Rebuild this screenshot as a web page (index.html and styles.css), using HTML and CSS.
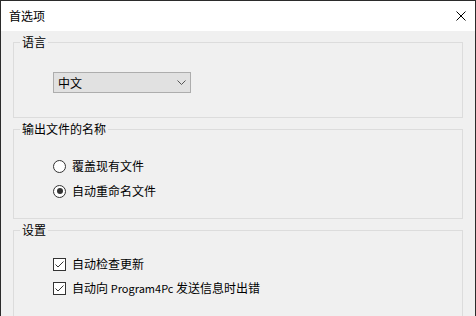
FILE: index.html
```html
<!DOCTYPE html>
<html lang="zh-CN">
<head>
  <meta charset="UTF-8" />
  <meta name="viewport" content="width=device-width, initial-scale=1.0" />
  <title>首选项</title>
  <link rel="stylesheet" href="styles.css">
</head>
<body>
  <div class="window">
    <div class="titlebar">
      <span class="title">首选项</span>
      <button class="close" aria-label="关闭">
        <svg width="10" height="10" viewBox="0 0 10 10">
          <path d="M0.5 0.5 L9.5 9.5 M9.5 0.5 L0.5 9.5" stroke="#000" stroke-width="1" fill="none" />
        </svg>
      </button>
    </div>

    <div class="content">
      <fieldset class="group">
        <legend>语言</legend>
        <div class="group-body lang-body">
          <div class="select">
            <span>中文</span>
            <svg width="9" height="5" viewBox="0 0 9 5">
              <polyline points="0.5,0.5 4.5,4.5 8.5,0.5" stroke="#555" stroke-width="1" fill="none" />
            </svg>
          </div>
        </div>
      </fieldset>

      <fieldset class="group">
        <legend>输出文件的名称</legend>
        <div class="group-body radio-body">
          <label class="option"><span class="radio"></span><span>覆盖现有文件</span></label>
          <label class="option"><span class="radio checked"></span><span>自动重命名文件</span></label>
        </div>
      </fieldset>

      <fieldset class="group">
        <legend>设置</legend>
        <div class="group-body check-body">
          <label class="option">
            <span class="checkbox">
              <svg width="11" height="11" viewBox="0 0 11 11">
                <polyline points="1.5,5.5 4,8 9.5,2.5" stroke="#333" stroke-width="1" fill="none" />
              </svg>
            </span>
            <span>自动检查更新</span>
          </label>
          <label class="option">
            <span class="checkbox">
              <svg width="11" height="11" viewBox="0 0 11 11">
                <polyline points="1.5,5.5 4,8 9.5,2.5" stroke="#333" stroke-width="1" fill="none" />
              </svg>
            </span>
            <span>自动向 <span class="latin">Program4Pc</span> 发送信息时出错</span>
          </label>
        </div>
      </fieldset>
    </div>
  </div>
</body>
</html>
```

FILE: styles.css
```css
:root {
  --frame: #2b2b2b;
  --panel: #f0f0f0;
  --group-border: #dcdcdc;
  --text: #000000;
  --control-border: #333333;
  --select-bg: #e1e1e1;
  --select-border: #adadad;
}

html, body {
  margin: 0;
  padding: 0;
}

body {
  font-family: "Noto Sans CJK SC", "Noto Sans", sans-serif;
  font-size: 12px;
  color: var(--text);
  background-color: #ffffff;
}

.window {
  width: 476px;
  height: 316px;
  box-sizing: border-box;
  border: 1px solid var(--frame);
  border-bottom: none;
  display: flex;
  flex-direction: column;
  overflow: hidden;
}

.titlebar {
  height: 30px;
  flex: none;
  display: flex;
  align-items: center;
  justify-content: space-between;
  background-color: #ffffff;
  padding: 0 9px 0 8px;
}

.title {
  line-height: 16px;
}

.close {
  background: none;
  border: none;
  padding: 0;
  margin: 0;
  width: 10px;
  height: 10px;
  display: flex;
}

.content {
  flex: 1;
  background-color: var(--panel);
  padding: 3px 12px 0 12px;
  display: flex;
  flex-direction: column;
  gap: 3px;
}

.group {
  margin: 0;
  padding: 0;
  border: 1px solid var(--group-border);
  min-width: 0;
}

.group legend {
  margin-left: 6px;
  padding: 0 2px;
  line-height: 16px;
}

.group-body {
  padding-left: 39px;
}

.lang-body {
  padding-top: 22px;
  padding-bottom: 24px;
}

.select {
  width: 138px;
  height: 21px;
  box-sizing: border-box;
  background-color: var(--select-bg);
  border: 1px solid var(--select-border);
  display: flex;
  align-items: center;
  justify-content: space-between;
  padding: 0 4px 0 4px;
  line-height: 16px;
}

.radio-body {
  padding-top: 19px;
  padding-bottom: 17px;
  display: flex;
  flex-direction: column;
  gap: 5px;
}

.check-body {
  padding-top: 16px;
  padding-bottom: 20px;
  display: flex;
  flex-direction: column;
  gap: 4px;
}

.option {
  height: 20px;
  display: flex;
  align-items: center;
  gap: 6px;
  line-height: 16px;
}

.radio {
  width: 13px;
  height: 13px;
  box-sizing: border-box;
  border: 1px solid var(--control-border);
  border-radius: 50%;
  background-color: #ffffff;
  display: flex;
  align-items: center;
  justify-content: center;
}

.radio.checked::after {
  content: "";
  width: 6px;
  height: 6px;
  border-radius: 50%;
  background-color: var(--control-border);
}

.checkbox {
  width: 13px;
  height: 13px;
  box-sizing: border-box;
  border: 1px solid var(--control-border);
  background-color: #ffffff;
  display: flex;
}

.latin {
  font-size: 11px;
}
```
